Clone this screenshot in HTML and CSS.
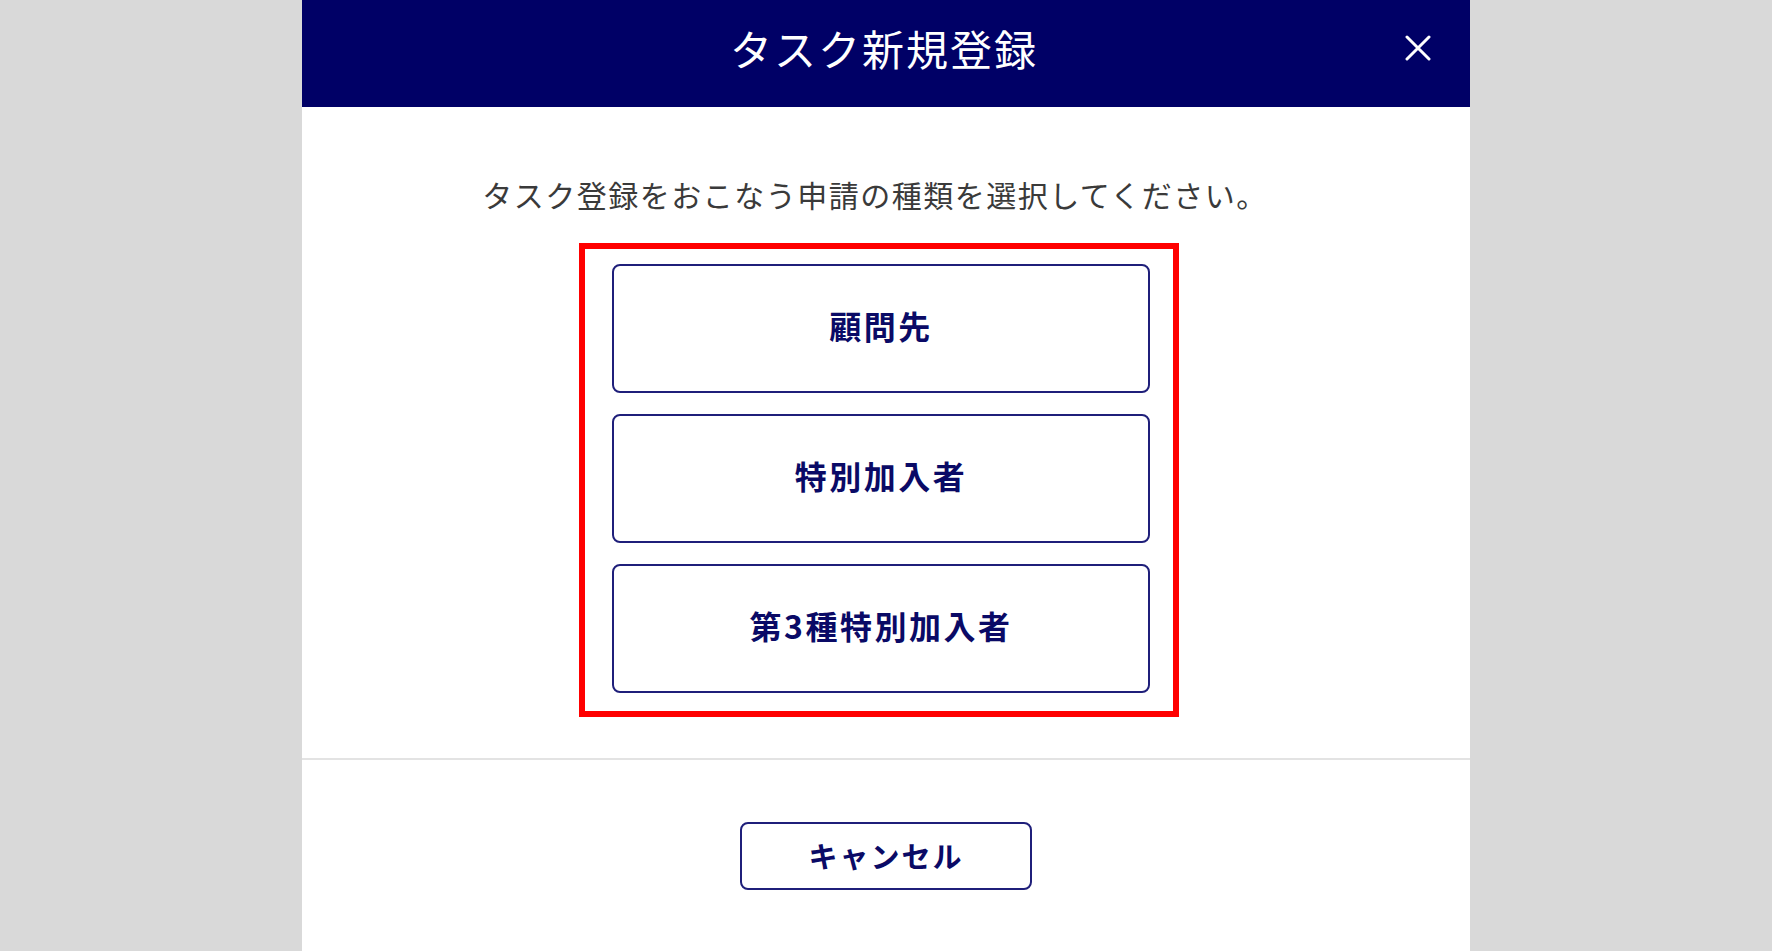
FILE: index.html
```html
<!DOCTYPE html>
<html lang="ja">
<head>
<meta charset="utf-8">
<title>タスク新規登録</title>
<link rel="stylesheet" href="styles.css">
</head>
<body>
<div class="modal">
  <header class="modal-header">
    <div class="spacer"></div>
    <h1 class="modal-title">タスク新規登録</h1>
    <div class="close-wrap">
      <button class="close-btn" aria-label="閉じる">
        <svg width="26" height="26" viewBox="0 0 26 26"><path d="M2 2 L24 24 M24 2 L2 24" stroke="#fff" stroke-width="3" stroke-linecap="round"/></svg>
      </button>
    </div>
  </header>
  <section class="modal-body">
    <p class="lead">タスク登録をおこなう申請の種類を選択してください。</p>
    <div class="highlight">
      <button class="choice">顧問先</button>
      <button class="choice">特別加入者</button>
      <button class="choice">第3種特別加入者</button>
    </div>
  </section>
  <footer class="modal-footer">
    <button class="cancel">キャンセル</button>
  </footer>
</div>
</body>
</html>
```

FILE: styles.css
```css
html, body {
  margin: 0;
  padding: 0;
  height: 100%;
}
body {
  background: #d9d9d9;
  font-family: "Noto Sans CJK JP", "Noto Sans", sans-serif;
  overflow: hidden;
}
.modal {
  width: 1168px;
  height: 951px;
  margin: 0 auto;
  background: #fff;
  display: flex;
  flex-direction: column;
}
.modal-header {
  height: 107px;
  box-sizing: border-box;
  background: #000066;
  display: grid;
  grid-template-columns: 1fr auto 1fr;
  align-items: center;
  padding-bottom: 11px;
}
.modal-title {
  margin: 0 0 0 -4px;
  color: #fff;
  font-size: 42px;
  font-weight: 400;
  letter-spacing: 2px;
  line-height: 48px;
}
.close-wrap {
  display: flex;
  justify-content: flex-end;
  padding-right: 39px;
}
.close-btn {
  background: none;
  border: 0;
  padding: 0;
  width: 26px;
  height: 26px;
  display: flex;
  cursor: pointer;
}
.modal-body {
  padding-top: 67px;
  display: flex;
  flex-direction: column;
  align-items: flex-start;
  border-bottom: 2px solid #e3e3e3;
  padding-bottom: 41px;
}
.lead {
  margin: 0 0 29px 0;
  align-self: center;
  font-size: 30px;
  line-height: 40px;
  color: #3a3a3a;
  letter-spacing: 1.5px;
  margin-left: -22px;
}
.highlight {
  margin-left: 277px;
  width: 600px;
  box-sizing: border-box;
  border: 6px solid #ff0000;
  padding: 15px 23px 18px 27px;
  display: flex;
  flex-direction: column;
  gap: 21px;
}
.choice {
  height: 129px;
  width: 538px;
  background: #fff;
  border: 2px solid #1f1f7a;
  border-radius: 8px;
  color: #0a0a66;
  font-family: "Noto Sans CJK JP", "Noto Sans", sans-serif;
  font-size: 32px;
  font-weight: 700;
  letter-spacing: 2.5px;
  padding: 0 0 7px 0;
  cursor: pointer;
}
.modal-footer {
  padding-top: 62px;
  display: flex;
  justify-content: center;
}
.cancel {
  width: 292px;
  height: 68px;
  background: #fff;
  border: 2px solid #1f1f7a;
  border-radius: 8px;
  color: #0a0a66;
  font-family: "Noto Sans CJK JP", "Noto Sans", sans-serif;
  font-size: 29px;
  font-weight: 700;
  letter-spacing: 2px;
  padding: 0 0 2px 0;
  cursor: pointer;
}
```
